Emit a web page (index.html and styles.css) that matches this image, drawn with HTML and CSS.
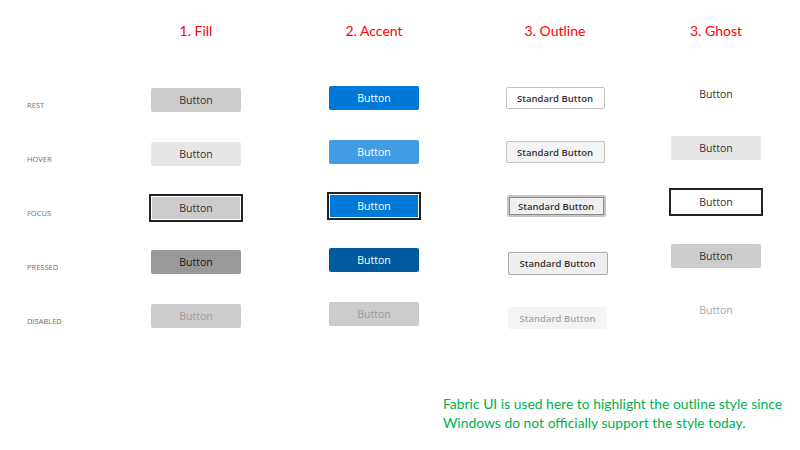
FILE: index.html
```html
<!DOCTYPE html>
<html>
<head>
<meta charset="utf-8">
<link rel="stylesheet" href="styles.css">
</head>
<body>
<div class="page">
  <div class="grid">
    <div class="col labels">
      <div class="head"></div>
      <div class="slots">
        <div class="slot"><span class="lbl">REST</span></div>
        <div class="slot"><span class="lbl">HOVER</span></div>
        <div class="slot"><span class="lbl">FOCUS</span></div>
        <div class="slot"><span class="lbl">PRESSED</span></div>
        <div class="slot"><span class="lbl">DISABLED</span></div>
      </div>
    </div>
    <div class="col fill">
      <div class="head">1. Fill</div>
      <div class="slots">
        <div class="slot"><span class="btn f-rest">Button</span></div>
        <div class="slot"><span class="btn f-hover">Button</span></div>
        <div class="slot"><span class="btn f-focus">Button</span></div>
        <div class="slot"><span class="btn f-pressed">Button</span></div>
        <div class="slot"><span class="btn f-disabled">Button</span></div>
      </div>
    </div>
    <div class="col accent">
      <div class="head">2. Accent</div>
      <div class="slots">
        <div class="slot"><span class="btn a-rest">Button</span></div>
        <div class="slot"><span class="btn a-hover">Button</span></div>
        <div class="slot"><span class="btn a-focus">Button</span></div>
        <div class="slot"><span class="btn a-pressed">Button</span></div>
        <div class="slot"><span class="btn a-disabled">Button</span></div>
      </div>
    </div>
    <div class="col outline">
      <div class="head">3. Outline</div>
      <div class="slots">
        <div class="slot"><span class="obtn o-rest">Standard Button</span></div>
        <div class="slot"><span class="obtn o-hover">Standard Button</span></div>
        <div class="slot"><span class="obtn o-focus">Standard Button</span></div>
        <div class="slot"><span class="obtn o-pressed">Standard Button</span></div>
        <div class="slot"><span class="obtn o-disabled">Standard Button</span></div>
      </div>
    </div>
    <div class="col ghost">
      <div class="head">3. Ghost</div>
      <div class="slots">
        <div class="slot"><span class="btn g-rest">Button</span></div>
        <div class="slot"><span class="btn g-hover">Button</span></div>
        <div class="slot"><span class="btn g-focus">Button</span></div>
        <div class="slot"><span class="btn g-pressed">Button</span></div>
        <div class="slot"><span class="btn g-disabled">Button</span></div>
      </div>
    </div>
  </div>
  <p class="note">Fabric UI is used here to highlight the outline style since<br>Windows do not officially support the style today.</p>
</div>
</body>
</html>
```

FILE: styles.css
```css
html, body {
  margin: 0;
  padding: 0;
  background: #ffffff;
}
.page {
  width: 800px;
  height: 450px;
  overflow: hidden;
  font-family: "Open Sans", "Noto Sans", sans-serif;
}
.grid {
  display: grid;
  grid-template-columns: 106px 180px 176px 186px 136px;
}
.col {
  display: flex;
  flex-direction: column;
  align-items: center;
}
.head {
  margin-top: 22px;
  height: 18px;
  line-height: 18px;
  font-family: "Lato", "Liberation Sans", sans-serif;
  font-size: 14px;
  color: #ff0000;
  white-space: nowrap;
}
.slots {
  display: flex;
  flex-direction: column;
  margin-top: 33px;
}
.slot {
  height: 54px;
  display: flex;
  align-items: center;
  justify-content: center;
}
.labels {
  align-items: flex-start;
  padding-left: 27px;
}
.labels .slots { margin-top: 38px; }
.labels .slot { justify-content: flex-start; }
.lbl {
  font-size: 7.5px;
  color: #6e6e6e;
}
.accent .slots { margin-top: 31px; }
.outline .slots { margin-top: 31px; }
.ghost .slots { margin-top: 27px; }

.btn {
  box-sizing: border-box;
  width: 90px;
  height: 24px;
  display: flex;
  align-items: center;
  justify-content: center;
  font-size: 10.5px;
  color: #333333;
  border-radius: 2px;
}
.f-rest { background: #cccccc; }
.f-hover { background: #e6e6e6; }
.f-focus {
  width: 94px;
  height: 28px;
  background: #cccccc;
  border: 2px solid #222222;
  box-shadow: inset 0 0 0 1px #ffffff;
  border-radius: 0;
}
.f-pressed { background: #999999; color: #1a1a1a; }
.f-disabled { background: #cccccc; color: #9a9a9a; }

.a-rest { background: #0078d7; color: #ffffff; }
.a-hover { background: #429ce3; color: #ffffff; }
.a-focus {
  width: 94px;
  height: 28px;
  background: #0078d7;
  color: #ffffff;
  border: 2px solid #222222;
  box-shadow: inset 0 0 0 1px #ffffff;
  border-radius: 0;
}
.a-pressed { background: #005a9e; color: #ffffff; }
.a-disabled { background: #cccccc; color: #999999; }

.obtn {
  box-sizing: border-box;
  width: 99px;
  height: 22px;
  display: flex;
  align-items: center;
  justify-content: center;
  font-size: 9.5px;
  font-weight: 600;
  color: #333333;
  border: 1px solid #c2c2c2;
  border-radius: 2px;
  background: #ffffff;
  white-space: nowrap;
}
.o-hover { background: #f4f4f4; }
.o-focus {
  background: #f0f0f0;
  border: 2px solid #c6c6c6;
  box-shadow: inset 0 0 0 1px #8a8a8a;
  margin-left: 2px;
}
.o-pressed { background: #efefef; border-color: #a8a8a8; width: 100px; height: 23px; margin-top: 7px; margin-left: 5px; }
.o-disabled { background: #f4f4f4; border-color: #f4f4f4; color: #a6a6a6; width: 99px; margin-left: 5px; margin-top: 8px; }

.g-rest { background: transparent; }
.g-hover { background: #e6e6e6; }
.g-focus {
  width: 94px;
  height: 28px;
  background: #ffffff;
  border: 2px solid #222222;
  border-radius: 0;
}
.g-pressed { background: #cccccc; }
.g-disabled { background: transparent; color: #a6a6a6; }

.note {
  margin: 46px 0 0 443px;
  font-family: "Lato", "Liberation Sans", sans-serif;
  font-size: 13.9px;
  line-height: 19px;
  color: #00b050;
  white-space: nowrap;
}
```
